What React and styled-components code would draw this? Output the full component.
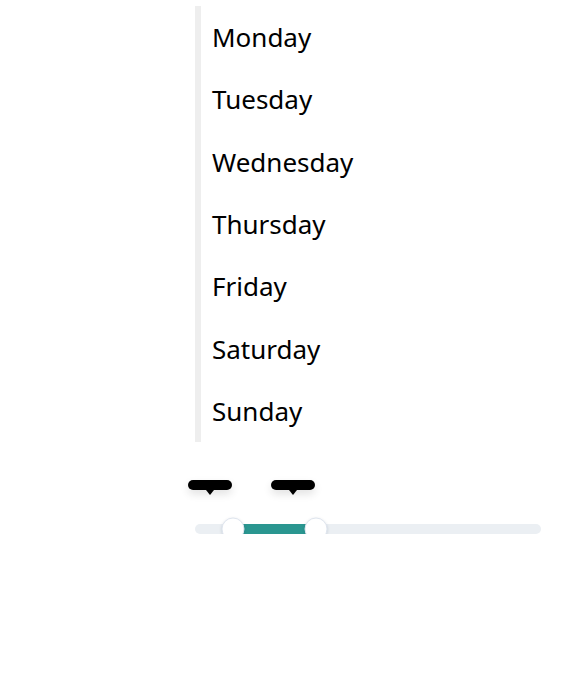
import styled, { createGlobalStyle } from 'styled-components';

const GlobalStyle = createGlobalStyle`
  body {
    margin: 0;
    background: #fff;
    font-family: "Noto Sans", "Open Sans", sans-serif;
  }
`;

const Page = styled.div`
  display: flex;
  flex-direction: column;
  padding: 6px 27px 0 195px;
`;

const DayList = styled.ul`
  list-style: none;
  margin: 0;
  padding: 0;
  border-left: 6px solid #eeeeee;
`;

const DayItem = styled.li`
  display: flex;
  align-items: center;
  height: 62.3px;
  padding-left: 11px;
  font-size: 26px;
  color: #000;
`;

const SliderArea = styled.div`
  position: relative;
  margin-top: 38px;
  padding-top: 44px;
  width: 346px;
`;

const Track = styled.div`
  position: relative;
  height: 10px;
  border-radius: 5px;
  background: #ebeff3;
`;

const Range = styled.div`
  position: absolute;
  top: 0;
  bottom: 0;
  background: #2a9690;
`;

const Thumb = styled.div`
  position: absolute;
  top: 50%;
  width: 21px;
  height: 21px;
  border-radius: 50%;
  background: #fff;
  border: 1px solid #dfe5ee;
  box-shadow: 0 1px 3px rgba(30, 50, 80, 0.15);
  transform: translate(-50%, -50%);
`;

const Tip = styled.div`
  position: absolute;
  top: 0;
  width: 44px;
  height: 10px;
  border-radius: 5px;
  background: #000;
  box-shadow: 0 4px 8px rgba(0, 0, 0, 0.12);
  transform: translateX(-50%);

  &::after {
    content: '';
    position: absolute;
    left: 50%;
    top: 10px;
    margin-left: -4px;
    border: 4px solid transparent;
    border-top: 5px solid #000;
    border-bottom: 0;
  }
`;

const days = ['Monday', 'Tuesday', 'Wednesday', 'Thursday', 'Friday', 'Saturday', 'Sunday'];

const low = 38;
const high = 121;

const App = () => {
  return (
    <Page>
      <GlobalStyle />
      <DayList>
        {days.map((d) => (
          <DayItem key={d}>{d}</DayItem>
        ))}
      </DayList>
      <SliderArea>
        <Tip style={{ left: low - 23 }} />
        <Tip style={{ left: high - 23 }} />
        <Track>
          <Range style={{ left: low, width: high - low }} />
          <Thumb style={{ left: low }} />
          <Thumb style={{ left: high }} />
        </Track>
      </SliderArea>
    </Page>
  );
};

export default App;
